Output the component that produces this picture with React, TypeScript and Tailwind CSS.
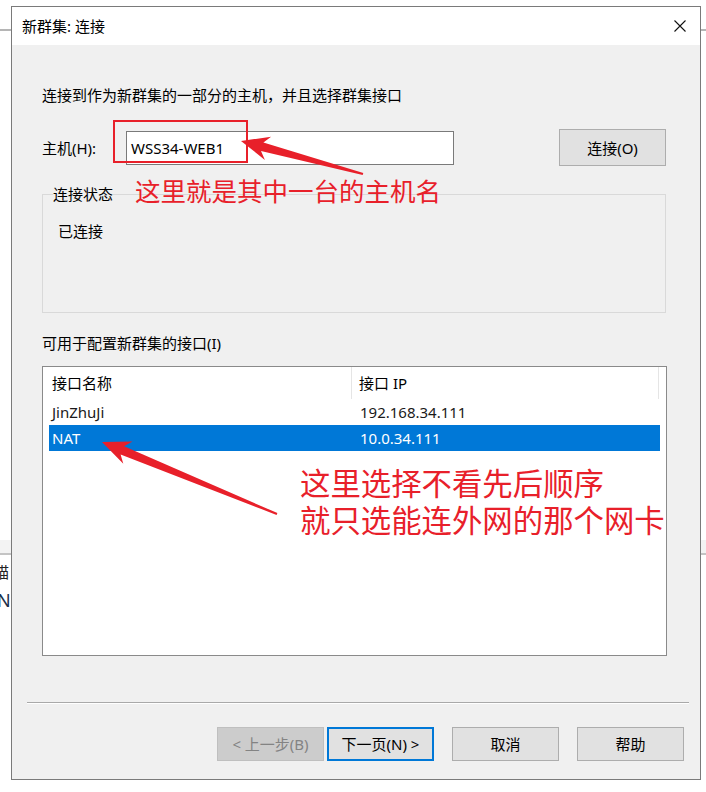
import React from "react";

const RED = "#e8202a";

function Arrows() {
  return (
    <svg className="absolute left-0 top-0 z-20 pointer-events-none" width="706" height="792" viewBox="0 0 706 792">
      <polygon
        fill={RED}
        points="241,141 264.9,159.9 261,151.1 362.7,175 363.3,173 263.4,142.4 271.1,136.7"
      />
      <polygon
        fill={RED}
        points="102,442 123.3,463.8 120.6,454.5 276.6,514.9 277.4,513.1 124.1,446.2 132.5,441.6"
      />
    </svg>
  );
}

type Variant = "normal" | "disabled" | "default";

function Btn({ children, variant = "normal", className = "" }: { children: React.ReactNode; variant?: Variant; className?: string }) {
  const v =
    variant === "disabled"
      ? "border border-[#bfbfbf] bg-[#cccccc] text-[#838383]"
      : variant === "default"
      ? "border-2 border-[#0078d7] bg-[#e1e1e1] text-black"
      : "border border-[#adadad] bg-[#e1e1e1] text-black";
  return (
    <div className={"flex items-center justify-center w-[107px] h-[34px] text-[15px] leading-[20px] " + v + " " + className}>
      {children}
    </div>
  );
}

export default function App() {
  return (
    <div className="relative w-[706px] h-[792px] bg-white overflow-hidden pt-[6px] pl-[11px] font-['Noto_Sans','Noto_Sans_CJK_SC',sans-serif] text-[15px] text-black">
      {/* background window remnants */}
      <div className="absolute left-0 top-[29px] w-[706px] h-[2px] bg-[#b5b5b5]" />
      <div className="absolute left-0 top-[540px] w-[706px] h-[13px] bg-[#f3f3f3]" />
      <div className="absolute left-0 top-[553px] w-[706px] h-[2px] bg-[#c4c4c4]" />
      <div className="absolute left-[-6px] top-[562px] text-[15px] leading-[20px] text-[#222]">描</div>
      <div className="absolute left-[-3px] top-[589px] text-[18px] leading-[22px] text-[#1a2f4a]">N</div>

      {/* dialog window */}
      <div className="relative z-10 w-[690px] h-[774px] border border-[#7a7a7a] flex flex-col bg-[#f0f0f0]">
        {/* title bar */}
        <div className="h-[38px] bg-white flex items-center justify-between pl-[10px] pr-[14px]">
          <span className="text-[15px] leading-[20px]">新群集: 连接</span>
          <svg width="12" height="12" viewBox="0 0 12 12">
            <path d="M0.5 0.5 L11.5 11.5 M11.5 0.5 L0.5 11.5" stroke="#111" strokeWidth="1.1" fill="none" />
          </svg>
        </div>

        {/* body */}
        <div className="flex-1 flex flex-col">
          <div className="pl-[30px] pr-[33px] flex flex-col">
            <div className="mt-[40px] leading-[20px]">连接到作为新群集的一部分的主机，并且选择群集接口</div>

            <div className="mt-[24px] h-[37px] flex items-center">
              <span className="w-[84px] leading-[20px]">主机(H):</span>
              <div className="w-[328px] h-[34px] border border-[#7a7a7a] bg-white flex items-center pl-[4px] leading-[20px]">
                WSS34-WEB1
              </div>
              <div className="ml-auto mr-[1px] flex items-center justify-center w-[107px] h-[37px] border border-[#adadad] bg-[#e1e1e1] leading-[20px]">
                连接(O)
              </div>
            </div>

            <fieldset className="mt-[18px] h-[129px] border border-[#d9d9d9] mr-[1px]">
              <legend className="ml-[10px] px-0 leading-[20px]">连接状态</legend>
              <div className="mt-[17px] pl-[15px] leading-[20px]">已连接</div>
            </fieldset>

            <div className="mt-[20px] leading-[20px]">可用于配置新群集的接口(I)</div>

            <div className="mt-[13px] h-[290px] border border-[#8a8a8a] bg-white flex flex-col">
              <div className="h-[32px] flex">
                <div className="w-[309px] pl-[9px] flex items-center border-r border-[#e5e5e5] leading-[20px]">接口名称</div>
                <div className="w-[307px] pl-[7px] flex items-center border-r border-[#e5e5e5] leading-[20px]">接口 IP</div>
              </div>
              <div className="pl-[6px] flex flex-col">
                <div className="w-[611px] h-[26px] flex items-center">
                  <div className="w-[303px] pl-[3px] leading-[20px] text-[#1a1a1a]">JinZhuJi</div>
                  <div className="pl-[8px] leading-[20px] text-[#1a1a1a]">192.168.34.111</div>
                </div>
                <div className="w-[611px] h-[26px] flex items-center bg-[#0078d7] text-white">
                  <div className="w-[303px] pl-[3px] leading-[20px]">NAT</div>
                  <div className="pl-[8px] leading-[20px]">10.0.34.111</div>
                </div>
              </div>
            </div>
          </div>

          <div className="mt-[46px] ml-[15px] mr-[11px] border-t border-[#a9a9a9] border-b border-b-white" />

          <div className="mt-[23px] flex justify-end pr-[16px]">
            <Btn variant="disabled">&lt; 上一步(B)</Btn>
            <Btn variant="default" className="ml-[3px]">下一页(N) &gt;</Btn>
            <Btn className="ml-[18px]">取消</Btn>
            <Btn className="ml-[18px]">帮助</Btn>
          </div>
        </div>
      </div>

      {/* annotations */}
      <div className="absolute z-20 left-[113px] top-[120px] w-[135px] h-[43px] border-2 border-[#e8202a]" />
      <Arrows />
      <div className="absolute z-20 left-[135px] top-[176px] text-[25.5px] leading-[28px] text-[#e8202a] font-['Noto_Sans_CJK_SC',sans-serif] whitespace-nowrap">
        这里就是其中一台的主机名
      </div>
      <div className="absolute z-20 left-[300px] top-[464px] text-[30.4px] leading-[37px] text-[#e8202a] font-['Noto_Sans_CJK_SC',sans-serif] whitespace-nowrap">
        <div>这里选择不看先后顺序</div>
        <div>就只选能连外网的那个网卡</div>
      </div>
    </div>
  );
}
